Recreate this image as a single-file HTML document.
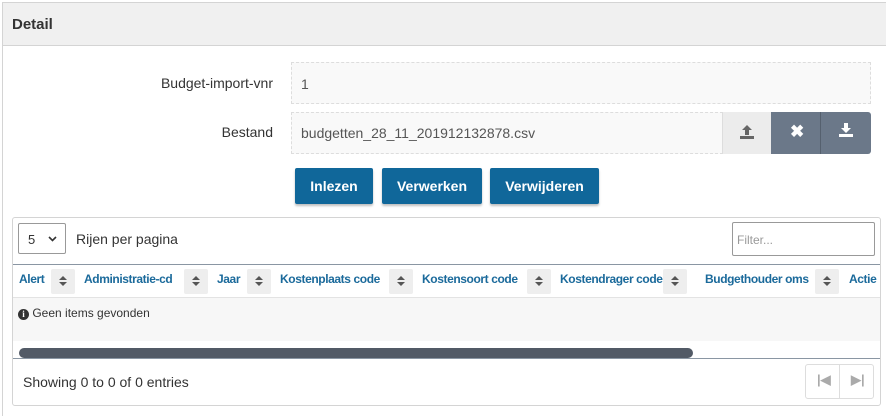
<!DOCTYPE html>
<html><head><meta charset="utf-8"><style>
*{box-sizing:border-box;margin:0;padding:0}
body{width:886px;height:416px;overflow:hidden;background:#fff;font-family:"Liberation Sans",sans-serif;position:relative;color:#333}
.a{position:absolute}
.panel{left:2px;top:2px;width:884px;height:414px;border:1px solid #d4d4d4;border-right:none;border-bottom:none}
.hdr{left:3px;top:3px;width:883px;height:43px;background:#f0f0f0;border-bottom:1px solid #d4d4d4;font-weight:bold;font-size:15px;padding:13px 0 0 9px;color:#333}
.lbl{font-size:14px;color:#333;text-align:right;width:200px}
.inp{background:#f9f9f9;border:1px dashed #ddd;font-size:14px;color:#555;padding-left:9px}
.btn{background:#10679a;color:#fff;font-weight:bold;font-size:14px;text-align:center;line-height:36px;border-radius:2px;box-shadow:0 2px 2px rgba(0,0,0,.25)}
.th{font-weight:bold;font-size:12px;letter-spacing:-0.4px;color:#1b6a9b;top:272px;white-space:nowrap}
.sb{width:24px;height:25px;background:#eee;top:269px;border-radius:2px}
.sb:before{content:"";position:absolute;left:8px;top:7px;border:4px solid transparent;border-bottom:4px solid #555;border-top:0}
.sb:after{content:"";position:absolute;left:8px;top:13px;border:4px solid transparent;border-top:4px solid #555;border-bottom:0}
</style></head><body>
<div class="a panel"></div>
<div class="a hdr">Detail</div>
<div class="a lbl" style="left:73px;top:75px">Budget-import-vnr</div>
<div class="a inp" style="left:291px;top:62px;width:580px;height:42px;line-height:42px">1</div>
<div class="a lbl" style="left:73px;top:124px">Bestand</div>
<div class="a inp" style="left:291px;top:112px;width:432px;height:42px;line-height:40px">budgetten_28_11_201912132878.csv</div>
<div class="a" style="left:722px;top:112px;width:50px;height:42px;background:#ececec;border-left:1px solid #ddd"></div>
<svg class="a" style="left:739px;top:124px" width="16" height="16" viewBox="0 0 16 16"><path d="M8 1 L13 6 H10 V11 H6 V6 H3 Z" fill="#666"/><rect x="1" y="12" width="14" height="3" fill="#666"/></svg>
<div class="a" style="left:771px;top:112px;width:100px;height:42px;background:#6b7889;border-radius:0 3px 3px 0"></div>
<div class="a" style="left:820px;top:112px;width:1px;height:42px;background:#55606e"></div>
<div class="a" style="left:790px;top:122px;color:#fff;font-weight:bold;font-size:17px">✖</div>
<svg class="a" style="left:838px;top:122px" width="16" height="16" viewBox="0 0 16 16"><path d="M6 1 H10 V6 H13 L8 11 L3 6 H6 Z" fill="#fff"/><rect x="1" y="12" width="14" height="3" fill="#fff"/></svg>
<div class="a btn" style="left:295px;top:168px;width:78px">Inlezen</div>
<div class="a btn" style="left:382px;top:168px;width:100px">Verwerken</div>
<div class="a btn" style="left:490px;top:168px;width:109px">Verwijderen</div>
<div class="a" style="left:12px;top:217px;width:869px;height:189px;border:1px solid #d4d4d4;border-radius:3px"></div>
<div class="a" style="left:18px;top:223px;width:48px;height:31px;border:1px solid #999;border-radius:2px;font-size:13px;padding:8px 0 0 9px">5<svg style="position:absolute;left:29px;top:12px" width="9" height="6" viewBox="0 0 9 6"><path d="M1 1 L4.5 4.5 L8 1" stroke="#333" stroke-width="1.6" fill="none"/></svg></div>
<div class="a" style="left:76px;top:231px;font-size:14px">Rijen per pagina</div>
<div class="a" style="left:732px;top:222px;width:143px;height:34px;border:1px solid #999;border-radius:2px;font-size:12px;color:#999;padding:10px 0 0 4px">Filter...</div>
<div class="a" style="left:13px;top:264px;width:867px;height:1px;background:#8a96a3"></div>
<div class="a th" style="left:19px">Alert</div><div class="a sb" style="left:51px"></div>
<div class="a th" style="left:84px">Administratie-cd</div><div class="a sb" style="left:184px"></div>
<div class="a th" style="left:217px">Jaar</div><div class="a sb" style="left:247px"></div>
<div class="a th" style="left:280px">Kostenplaats code</div><div class="a sb" style="left:389px"></div>
<div class="a th" style="left:422px">Kostensoort code</div><div class="a sb" style="left:527px"></div>
<div class="a th" style="left:560px">Kostendrager code</div><div class="a sb" style="left:663px"></div>
<div class="a th" style="left:705px">Budgethouder oms</div><div class="a sb" style="left:815px"></div>
<div class="a th" style="left:849px;width:30px;overflow:hidden">Actie</div>
<div class="a" style="left:13px;top:297px;width:867px;height:44px;background:#f7f7f7;border-top:1px solid #e3e3e3"></div>
<div class="a" style="left:18px;top:306px;font-size:12px;color:#333"><span style="display:inline-block;width:11px;height:11px;border-radius:50%;background:#333;color:#fff;font-size:9px;font-weight:bold;text-align:center;line-height:11px;font-family:'Liberation Serif',serif">i</span> Geen items gevonden</div>
<div class="a" style="left:19px;top:348px;width:674px;height:10px;background:#525a66;border-radius:5px"></div>
<div class="a" style="left:13px;top:358px;width:867px;height:1px;background:#8a96a3"></div>
<div class="a" style="left:23px;top:374px;font-size:14px">Showing 0 to 0 of 0 entries</div>
<div class="a" style="left:805px;top:364px;width:69px;height:35px;border:1px solid #ddd;border-radius:3px"></div>
<div class="a" style="left:839px;top:365px;width:1px;height:33px;background:#ddd"></div>
<div class="a" style="left:817px;top:372px;font-size:13px;color:#aaa;font-weight:bold">|◀</div>
<div class="a" style="left:851px;top:372px;font-size:13px;color:#aaa;font-weight:bold">▶|</div>
</body></html>
